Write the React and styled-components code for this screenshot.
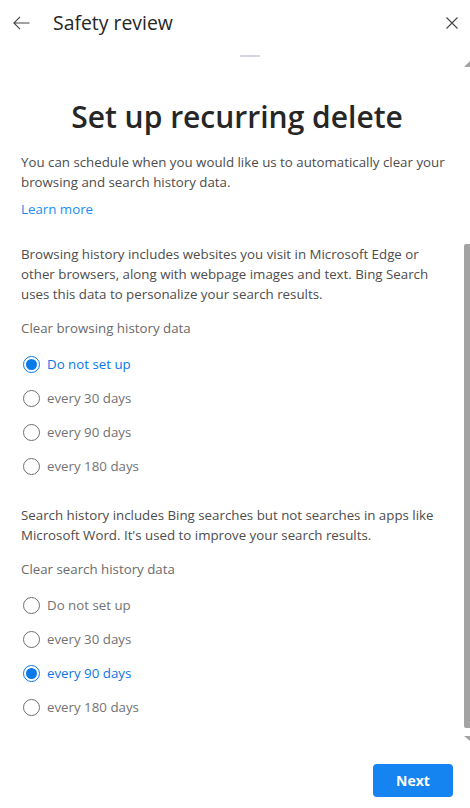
import React from "react";
import styled, { createGlobalStyle } from "styled-components";

const Global = createGlobalStyle`
  html, body { margin: 0; padding: 0; background: #fff; }
  body { font-family: "Open Sans", "Noto Sans", sans-serif; }
  * { box-sizing: border-box; }
`;

const Page = styled.div`
  width: 470px;
  height: 808px;
  display: flex;
  flex-direction: column;
  background: #fff;
  overflow: hidden;
`;

const Header = styled.header`
  height: 45px;
  display: flex;
  align-items: center;
  padding: 0 12px 0 13px;
`;

const IconButton = styled.button`
  border: 0;
  background: none;
  padding: 0;
  display: flex;
  align-items: center;
  justify-content: center;
  color: #444;
  cursor: pointer;
`;

const Title = styled.h1`
  flex: 1;
  margin: 0 0 0 23px;
  font-size: 19.4px;
  font-weight: 500;
  color: #262626;
  line-height: 24px;
`;

const Body = styled.div`
  flex: 1;
  display: flex;
  min-height: 0;
`;

const Content = styled.main`
  flex: 1;
  padding: 10px 0 0 21px;
`;

const Handle = styled.div`
  width: 20px;
  height: 2px;
  border-radius: 1px;
  background: #d4d3de;
  margin: 0 auto 0 219px;
`;

const Heading = styled.h2`
  margin: 40px 0 0 -9px;
  text-align: center;
  font-size: 30px;
  line-height: 40px;
  font-weight: 600;
  color: #262626;
`;

const Para = styled.p`
  margin: ${(p) => p.$mt}px 0 0;
  font-size: 13.3px;
  line-height: 20px;
  color: #4d4d4d;
  white-space: nowrap;
`;

const Link = styled.a`
  display: block;
  margin-top: 7px;
  font-size: 13.3px;
  line-height: 20px;
  color: #1a8cf0;
  text-decoration: none;
`;

const GroupLabel = styled.div`
  margin-top: 14px;
  font-size: 13.3px;
  line-height: 20px;
  color: #6b6b6b;
`;

const RadioList = styled.div`
  margin-top: 9px;
  display: flex;
  flex-direction: column;
`;

const Option = styled.label`
  height: 34px;
  display: flex;
  align-items: center;
  gap: 7px;
  font-size: 13.3px;
  color: ${(p) => (p.$checked ? "#0a78e6" : "#737373")};
`;

const Circle = styled.span`
  width: 17px;
  height: 17px;
  border-radius: 50%;
  margin-left: 2px;
  border: 1px solid ${(p) => (p.$checked ? "#0a7ae8" : "#6f6f6f")};
  display: flex;
  align-items: center;
  justify-content: center;
  &::after {
    content: "";
    width: 11px;
    height: 11px;
    border-radius: 50%;
    background: ${(p) => (p.$checked ? "#0a7ae8" : "transparent")};
  }
`;

const Track = styled.div`
  width: 8px;
  display: flex;
  flex-direction: column;
  align-items: flex-end;
  padding: 16px 0 9px;
`;

const Arrow = styled.svg`
  display: block;
  flex: none;
`;

const Thumb = styled.div`
  width: 6px;
  height: 484px;
  margin: auto 0 8px;
  background: #a3a3a3;
  border-radius: 2px 0 0 2px;
`;

const Footer = styled.footer`
  height: 58px;
  display: flex;
  justify-content: flex-end;
  align-items: flex-start;
  padding: 14px 17px 0 0;
`;

const NextButton = styled.button`
  width: 80px;
  height: 33px;
  border: 0;
  border-radius: 4px;
  background: #1584f1;
  color: #fff;
  font-family: "Open Sans", "Noto Sans", sans-serif;
  font-size: 14px;
  font-weight: 700;
  cursor: pointer;
`;

function RadioGroup({ options, selected }) {
  return (
    <RadioList>
      {options.map((o, i) => (
        <Option key={o} $checked={i === selected}>
          <Circle $checked={i === selected} />
          {o}
        </Option>
      ))}
    </RadioList>
  );
}

const opts = ["Do not set up", "every 30 days", "every 90 days", "every 180 days"];

export default function App() {
  return (
    <Page>
      <Global />
      <Header>
        <IconButton aria-label="Back">
          <svg width="17" height="14" viewBox="0 0 17 14" fill="none" stroke="#444" strokeWidth="1.1">
            <path d="M16.5 7H1M7 0.8L0.9 7L7 13.2" />
          </svg>
        </IconButton>
        <Title>Safety review</Title>
        <IconButton aria-label="Close">
          <svg width="12" height="12" viewBox="0 0 12 12" fill="none" stroke="#444" strokeWidth="1.1">
            <path d="M0.5 0.5L11.5 11.5M11.5 0.5L0.5 11.5" />
          </svg>
        </IconButton>
      </Header>
      <Body>
        <Content>
          <Handle />
          <Heading>Set up recurring delete</Heading>
          <Para $mt={15}>
            You can schedule when you would like us to automatically clear your
            <br />
            browsing and search history data.
          </Para>
          <Link href="#">Learn more</Link>
          <Para $mt={25}>
            Browsing history includes websites you visit in Microsoft Edge or
            <br />
            other browsers, along with webpage images and text. Bing Search
            <br />
            uses this data to personalize your search results.
          </Para>
          <GroupLabel>Clear browsing history data</GroupLabel>
          <RadioGroup options={opts} selected={0} />
          <Para $mt={22}>
            Search history includes Bing searches but not searches in apps like
            <br />
            Microsoft Word. It's used to improve your search results.
          </Para>
          <GroupLabel>Clear search history data</GroupLabel>
          <RadioGroup options={opts} selected={2} />
        </Content>
        <Track>
          <Arrow width="6" height="6" viewBox="0 0 6 6">
            <path d="M6 0L6 6L0 6Z" fill="#a3a3a3" />
          </Arrow>
          <Thumb />
          <Arrow width="6" height="5" viewBox="0 0 6 5">
            <path d="M0 0L6 0L6 5Z" fill="#a3a3a3" />
          </Arrow>
        </Track>
      </Body>
      <Footer>
        <NextButton>Next</NextButton>
      </Footer>
    </Page>
  );
}
